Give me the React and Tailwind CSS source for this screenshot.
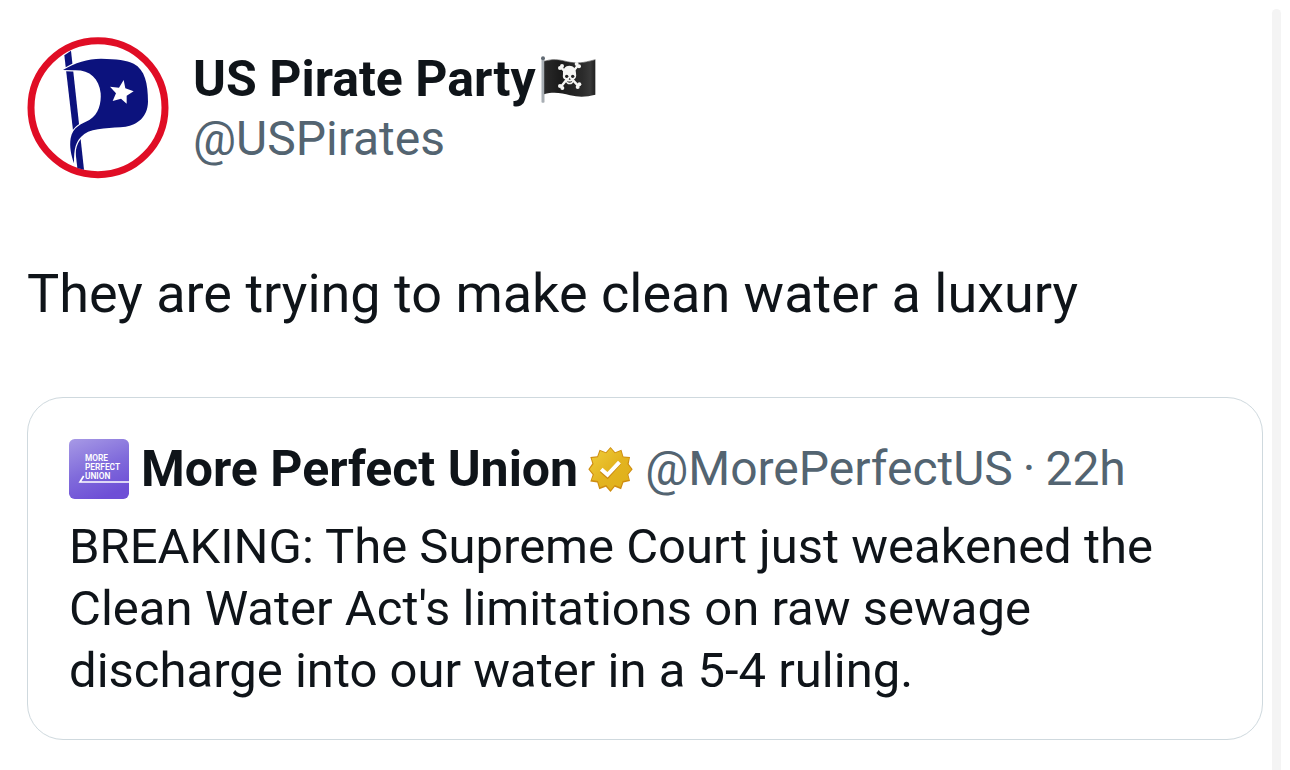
import React from 'react';

const PirateLogo = () => (
  <svg viewBox="22 21 426 426" className="h-[142px] w-[142px] shrink-0" role="img" aria-label="US Pirate Party">
    <circle cx="235" cy="233" r="201" fill="#fff" stroke="#e00d25" strokeWidth="21" />
    {/* Pole */}
    <path d="M134 76 L154 62 L193 419 L173 414 Z" fill="#0c127d" />
    {/* Flag */}
    <path
      d="M130 120 C166 98 204 86 244 86 C292 87 320 90 342 101 C376 119 385 160 385 215 C384 262 352 284 318 290 C278 295 222 291 194 312 C166 333 163 358 163 400 C154 376 149 349 153 325 C159 291 185 282 209 270 C238 253 245 218 243 190 C238 141 206 117 158 121 Z"
      fill="#0c127d"
      stroke="#fff"
      strokeWidth="7"
      paintOrder="stroke"
    />
    {/* Star */}
    <path d="M312 150 L317 175 L342 184 L321 197 L321 221 L304 206 L279 213 L289 190 L271 170 L298 173 Z" fill="#fff" />
  </svg>
);

const PirateFlag = () => (
  <svg viewBox="0 0 171 147" className="ml-1 h-[49px] w-[57px] shrink-0" role="img" aria-label="Pirate flag">
    <defs>
      <linearGradient id="flag-cloth" x1="0" y1="0" x2="1" y2="0">
        <stop offset="0" stopColor="#2b2b2b" />
        <stop offset="0.3" stopColor="#1b1b1b" />
        <stop offset="0.75" stopColor="#2b2b2b" />
        <stop offset="0.9" stopColor="#383838" />
        <stop offset="1" stopColor="#202020" />
      </linearGradient>
      <linearGradient id="flag-pole" x1="0" y1="0" x2="1" y2="0">
        <stop offset="0" stopColor="#7b848d" />
        <stop offset="0.5" stopColor="#c3c8cc" />
        <stop offset="1" stopColor="#7e858b" />
      </linearGradient>
    </defs>
    <path
      d="M12 19 C48 8 68 18 92 22 C120 27 142 20 166 14 V119 C140 126 118 127 90 121 C66 115 42 109 12 118 Z"
      fill="url(#flag-cloth)"
    />
    <path d="M12 19 C48 8 68 18 92 22 C120 27 142 20 166 14" fill="none" stroke="#555" strokeWidth="2" />
    <rect x="5" y="12" width="8" height="131" rx="2" fill="url(#flag-pole)" />
    <circle cx="9" cy="10" r="6" fill="#626b74" />
    {/* Crossbones */}
    <g stroke="#f6f6f4" strokeWidth="7" strokeLinecap="round">
      <path d="M64 38 L114 92 M113 32 L64 94" />
    </g>
    <g fill="#f6f6f4">
      <circle cx="60" cy="39" r="6" />
      <circle cx="66" cy="33" r="6" />
      <circle cx="110" cy="27" r="6" />
      <circle cx="117" cy="34" r="6" />
      <circle cx="60" cy="93" r="6" />
      <circle cx="67" cy="99" r="6" />
      <circle cx="118" cy="88" r="6" />
      <circle cx="113" cy="96" r="6" />
      <path d="M88 32 C101 32 108 42 108 55 C110 66 107 72 101 74 C101 84 96 88 89 88 C82 88 77 84 77 74 C70 73 67 67 69 57 C68 42 76 32 88 32 Z" />
    </g>
    <g fill="#242424">
      <ellipse cx="80" cy="64" rx="5" ry="5" />
      <ellipse cx="98" cy="64" rx="5" ry="5" />
      <path d="M89 68 L92 74 H86 Z" />
      <path d="M81 77 Q89 82 97 77 Q96 83 89 83 Q82 83 81 77 Z" />
    </g>
  </svg>
);

const UnionLogo = () => (
  <svg viewBox="0 0 180 180" className="h-[60px] w-[60px] shrink-0" role="img" aria-label="More Perfect Union">
    <defs>
      <linearGradient id="union-bg" x1="0.1" y1="0" x2="0.5" y2="1">
        <stop offset="0" stopColor="#a597e5" />
        <stop offset="0.55" stopColor="#806bdb" />
        <stop offset="1" stopColor="#6e4fd6" />
      </linearGradient>
    </defs>
    <rect width="180" height="180" rx="17" fill="url(#union-bg)" />
    <g fill="#fff" fontFamily="Roboto, sans-serif" fontSize="25" fontWeight="600">
      <text x="48" y="65">MORE</text>
      <text x="48" y="92">PERFECT</text>
      <text x="48" y="119">UNION</text>
    </g>
    <path d="M44 111 L33 129 H180" fill="none" stroke="#fff" strokeWidth="5" />
  </svg>
);

const GoldBadge = () => (
  <svg viewBox="22 20 136 136" className="h-[45px] w-[45px] shrink-0" role="img" aria-label="Verified organization">
    <defs>
      <linearGradient id="gold-face" x1="0" y1="0" x2="1" y2="1">
        <stop offset="0" stopColor="#f0ce3b" />
        <stop offset="0.5" stopColor="#e3b420" />
        <stop offset="1" stopColor="#deb01a" />
      </linearGradient>
    </defs>
    <path
      d="M90 20 L104 36 L123 28 L129 49 L149 50 L145 71 L157 87 L144 103 L149 123 L129 127 L122 148 L103 140 L90 156 L76 140 L56 148 L50 127 L29 124 L36 104 L23 87 L35 70 L29 50 L50 48 L57 28 L76 36 Z"
      fill="#cf8d10"
    />
    <path
      d="M90 24 L103 39 L121 32 L127 51 L146 53 L141 71 L153 87 L141 102 L146 119 L127 123 L120 142 L103 135 L90 150 L77 135 L58 142 L52 123 L33 120 L40 103 L27 87 L39 71 L33 53 L52 51 L59 32 L77 39 Z"
      fill="url(#gold-face)"
    />
    <path d="M62 92 L81 109 L117 68" fill="none" stroke="#cb8a12" strokeWidth="12" />
    <path d="M62 87 L81 104 L117 66" fill="none" stroke="#fff" strokeWidth="12" />
  </svg>
);

const QuotedPost = () => (
  <article className="mt-[68px] rounded-[36px] border border-[#cfd9de] px-[41px] pt-[41px] pb-[37px]">
    <div className="flex items-center text-[48px] leading-[60px] whitespace-nowrap">
      <UnionLogo />
      <span className="ml-3 text-[50px] font-bold">More Perfect Union</span>
      <span className="mr-3 ml-2.5 flex">
        <GoldBadge />
      </span>
      <span className="flex gap-2.5 text-[#536471]">
        <span>@MorePerfectUS</span>
        <span>·</span>
        <span>22h</span>
      </span>
    </div>
    <p className="mt-[17px] text-[49px] leading-[62px]">
      BREAKING: The Supreme Court just weakened the
      <br />
      Clean Water Act's limitations on raw sewage
      <br />
      discharge into our water in a 5-4 ruling.
    </p>
  </article>
);

const App = () => (
  <div className="flex min-h-screen bg-white font-[Roboto,sans-serif] text-[#0f1419]">
    <main className="min-w-0 flex-1 pt-[37px] pr-[9px] pb-[30px] pl-[27px]">
      <header className="flex items-start">
        <PirateLogo />
        <div className="ml-6 pt-3 text-[48px] leading-[60px]">
          <div className="flex items-center">
            <h1 className="text-[50px] font-bold">US Pirate Party</h1>
            <PirateFlag />
          </div>
          <p className="text-[#536471]">@USPirates</p>
        </div>
      </header>
      <p className="mt-20 text-[54px] leading-[70px]">They are trying to make clean water a luxury</p>
      <QuotedPost />
    </main>
    {/* Scroll track */}
    <div className="mt-[9px] mr-[9px] w-[9px] shrink-0 rounded-t-full bg-[#f4f4f4]" />
  </div>
);

export default App;
